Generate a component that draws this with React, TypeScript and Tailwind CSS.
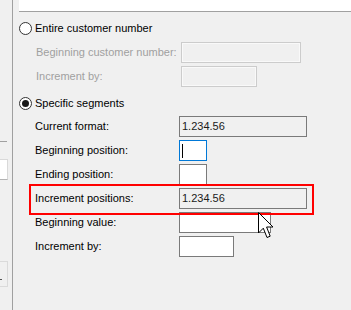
import React from "react";

const font = { fontFamily: '"Liberation Sans", Arial, sans-serif' };

function Radio({ checked, label }: { checked?: boolean; label: string }) {
  return (
    <div className="h-[24px] flex items-center pl-[6px]">
      <span className="w-[13px] h-[13px] rounded-full border border-[#333333] bg-white flex items-center justify-center">
        {checked && <span className="w-[7px] h-[7px] rounded-full bg-[#1a1a1a]" />}
      </span>
      <span className="ml-[3px] text-black">{label}</span>
    </div>
  );
}

function DisabledRow({ label, width }: { label: string; width: string }) {
  return (
    <div className="h-[24px] flex items-start pl-[23px]">
      <span className="w-[145px] leading-[21px] text-[#a0a0a0]">{label}</span>
      <div
        className={clsx(
          "h-[21px] border border-[#cccccc] bg-[#f0f0f0] shadow-[inset_0_0_0_1px_#f9f9f9]",
          width
        )}
      />
    </div>
  );
}

function clsx(...c: string[]) {
  return c.join(" ");
}

type Box = "readonly" | "focus" | "plain";

function FieldRow({
  label,
  width,
  kind,
  value,
}: {
  label: string;
  width: string;
  kind: Box;
  value?: string;
}) {
  const boxClass =
    kind === "readonly"
      ? "border-[#7a7a7a] bg-[#f0f0f0]"
      : kind === "focus"
      ? "border-[#0078d7] bg-white"
      : "border-[#7a7a7a] bg-white";
  return (
    <div className="h-[24px] flex items-start pl-[22px]">
      <span className="w-[144px] leading-[21px] text-black">{label}</span>
      <div className={clsx("h-[21px] border flex items-center pl-[2px]", boxClass, width)}>
        {value && <span className="text-[#1a1a1a] leading-none">{value}</span>}
        {kind === "focus" && <span className="w-[1px] h-[14px] bg-black" />}
      </div>
    </div>
  );
}

export default function App() {
  return (
    <div
      className="relative w-[351px] h-[310px] bg-[#f0f0f0] flex overflow-hidden text-[11px]"
      style={font}
    >
      {/* cut-off list at the left */}
      <div className="w-[12px] flex flex-col">
        <div className="mt-[141px] w-[7px] h-[1px] bg-[#a0a0a0]" />
        <div className="mt-[17px] w-[8px] h-[21px] bg-white border-y border-r border-[#d9d9d9] border-b-[#b4b4b4]" />
        <div className="mt-[81px] w-[8px] h-[26px] border-y border-r border-[#dadada] flex items-center">
          <span className="mt-[10px] w-[2px] h-[1px] bg-[#555555]" />
        </div>
      </div>

      <div className="flex-1 border-l border-[#a0a0a0] flex flex-col">
        <div className="ml-[6px] h-[12px] bg-white border-b border-[#a0a0a0]" />

        <div className="mt-[4px]">
          <Radio label="Entire customer number" />
        </div>
        <div className="mt-[2px]">
          <DisabledRow label="Beginning customer number:" width="w-[120px]" />
          <DisabledRow label="Increment by:" width="w-[76px]" />
        </div>
        <div className="mt-[1px]">
          <Radio checked label="Specific segments" />
        </div>
        <div className="mt-[1px]">
          <FieldRow label="Current format:" width="w-[128px]" kind="readonly" value="1.234.56" />
          <FieldRow label="Beginning position:" width="w-[28px]" kind="focus" />
          <FieldRow label="Ending position:" width="w-[28px]" kind="plain" />
          <FieldRow label="Increment positions:" width="w-[128px]" kind="readonly" value="1.234.56" />
          <FieldRow label="Beginning value:" width="w-[92px]" kind="plain" />
          <FieldRow label="Increment by:" width="w-[55px]" kind="plain" />
        </div>
      </div>

      {/* highlight annotation */}
      <div className="absolute left-[29px] top-[184px] w-[285px] h-[31px] border-2 border-[#ff0000]" />

      {/* mouse pointer */}
      <svg
        className="absolute left-[258px] top-[212px]"
        width="17"
        height="27"
        viewBox="0 0 17 27"
      >
        <path
          d="M0.5 0.5 L0.5 21 L5.3 16.2 L9 25.5 L12.2 24.2 L8.6 15 L15 15 Z"
          fill="white"
          stroke="black"
          strokeWidth="1"
          strokeLinejoin="miter"
        />
      </svg>
    </div>
  );
}
